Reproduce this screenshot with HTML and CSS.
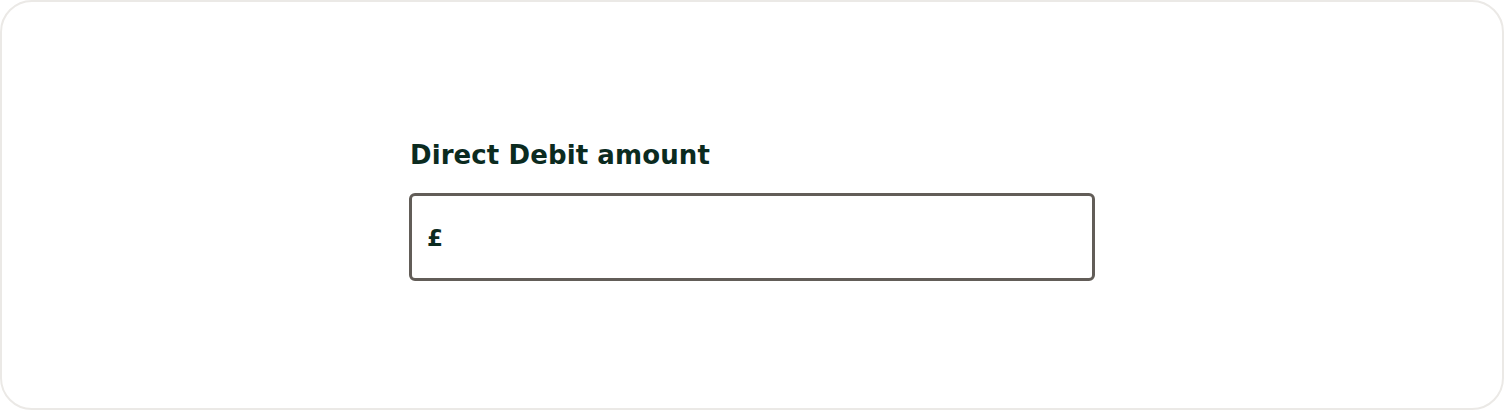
FILE: index.html
```html
<!DOCTYPE html>
<html>
<head>
<meta charset="utf-8">
<link rel="stylesheet" href="styles.css">
</head>
<body>
<div class="card">
  <div class="field">
    <label class="label" for="amt">Direct Debit amount</label>
    <div class="input">
      <span class="currency">£</span>
      <input id="amt" class="control" type="text">
    </div>
  </div>
</div>
</body>
</html>
```

FILE: styles.css
```css
html, body { margin: 0; padding: 0; background: #fff; }
body { font-family: "DejaVu Sans", sans-serif; }
.card {
  box-sizing: border-box;
  width: 1504px;
  height: 410px;
  border: 2px solid #ebe9e6;
  border-radius: 32px;
  display: flex;
  justify-content: center;
  padding-top: 133px;
}
.field {
  width: 686px;
  display: flex;
  flex-direction: column;
}
.label {
  color: #0b2b1f;
  font-weight: 700;
  font-size: 26px;
  line-height: 40px;
  letter-spacing: 0.1px;
  padding-left: 1px;
  margin-bottom: 18px;
}
.input {
  box-sizing: border-box;
  height: 88px;
  border: 3px solid #625d58;
  border-radius: 6px;
  display: flex;
  align-items: center;
  padding-left: 15px;
}
.currency {
  color: #0b2b1f;
  font-weight: 700;
  font-size: 23px;
  line-height: 1;
  padding-top: 3px;
}
.control {
  flex: 1;
  border: 0;
  outline: none;
  background: transparent;
  font: inherit;
  height: 100%;
}
```
